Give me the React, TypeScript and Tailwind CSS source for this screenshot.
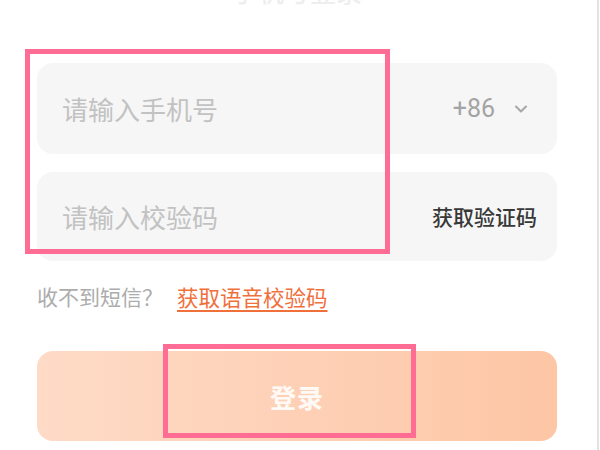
import { ChevronDown } from 'lucide-react'

const cjk = { fontFamily: '"Noto Sans CJK SC", "Noto Sans", sans-serif' }

export default function App() {
    return (
        <div className="relative w-[600px] h-[450px] overflow-hidden bg-white" style={cjk}>
            <div className="w-[599px] h-full border-r-2 border-[#e2e2e2] pl-[37px] pr-[40px]">
                {/* Title, mostly scrolled out of view */}
                <div className="h-[63px] overflow-hidden flex justify-center">
                    <div className="-mt-[26px] text-[26px] leading-[34px] font-medium text-[#eeeeee]">手机号登录</div>
                </div>

                {/* Phone */}
                <div className="h-[91px] rounded-[16px] bg-[#f6f6f6] flex items-center pl-[25px] pr-[26px]">
                    <span className="flex-1 text-[26px] text-[#c2c2c2]">请输入手机号</span>
                    <span className="text-[25px] text-[#a4a4a4]" style={{ fontFamily: 'Roboto, sans-serif' }}>+86</span>
                    <ChevronDown className="ml-[16px] w-[20px] h-[20px] text-[#a8a8a8]" strokeWidth={2.5} />
                </div>

                {/* Code */}
                <div className="mt-[18px] h-[89px] rounded-[16px] bg-[#f6f6f6] flex items-center pl-[25px] pr-[20px]">
                    <span className="flex-1 text-[26px] text-[#c2c2c2]">请输入校验码</span>
                    <span className="text-[21px] font-medium text-[#383838]">获取验证码</span>
                </div>

                {/* Hint */}
                <div className="mt-[21px] h-[30px] flex items-center">
                    <span className="text-[21px] text-[#acacac]">收不到短信？</span>
                    <span className="ml-[14px] text-[21.5px] text-[#f0703c] underline underline-offset-[4px] decoration-[2px]">获取语音校验码</span>
                </div>

                {/* Submit */}
                <button className="mt-[39px] w-full h-[90px] rounded-[16px] bg-gradient-to-r from-[#fedbc7] to-[#fdc6a5] text-[#fffaf5] text-[26px] font-bold tracking-[1px] flex items-center justify-center">
                    登录
                </button>
            </div>

            {/* Annotation boxes */}
            <div className="absolute left-[25px] top-[49px] w-[365px] h-[205px] border-[5px] border-[#ff6d95]" />
            <div className="absolute left-[163px] top-[344px] w-[253px] h-[94px] border-[5px] border-[#ff6d95]" />
        </div>
    )
}
